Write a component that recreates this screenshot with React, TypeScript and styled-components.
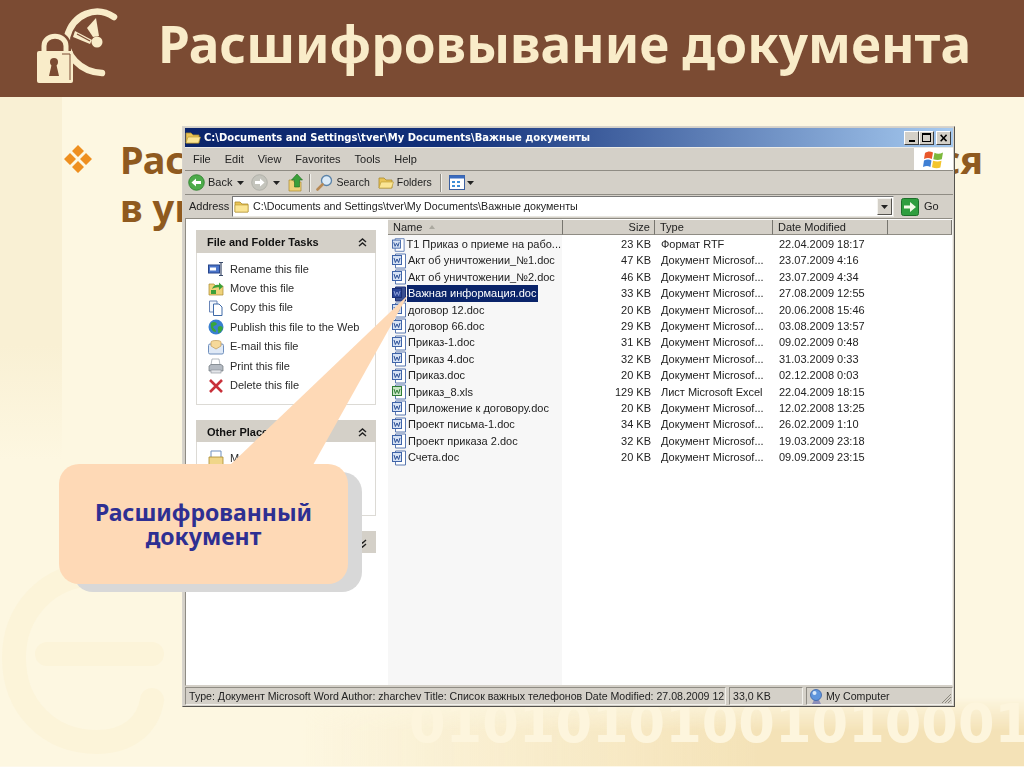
import React from "react";
import styled, { createGlobalStyle } from "styled-components";

const UI_FONT = `"Liberation Sans", Arial, sans-serif`;
const SLIDE_FONT = `"Noto Sans", "Open Sans", Arial, sans-serif`;

const GlobalStyle = createGlobalStyle`
    html, body {
        margin: 0;
        padding: 0;
        background: #fdf6df;
    }
`;

const files = [
    { name: "Т1 Приказ о приеме на рабо...", size: "23 KB", type: "Формат RTF", date: "22.04.2009 18:17" },
    { name: "Акт об уничтожении_№1.doc", size: "47 KB", type: "Документ Microsof...", date: "23.07.2009 4:16" },
    { name: "Акт об уничтожении_№2.doc", size: "46 KB", type: "Документ Microsof...", date: "23.07.2009 4:34" },
    { name: "Важная информация.doc", size: "33 KB", type: "Документ Microsof...", date: "27.08.2009 12:55", selected: true },
    { name: "договор 12.doc", size: "20 KB", type: "Документ Microsof...", date: "20.06.2008 15:46" },
    { name: "договор 66.doc", size: "29 KB", type: "Документ Microsof...", date: "03.08.2009 13:57" },
    { name: "Приказ-1.doc", size: "31 KB", type: "Документ Microsof...", date: "09.02.2009 0:48" },
    { name: "Приказ 4.doc", size: "32 KB", type: "Документ Microsof...", date: "31.03.2009 0:33" },
    { name: "Приказ.doc", size: "20 KB", type: "Документ Microsof...", date: "02.12.2008 0:03" },
    { name: "Приказ_8.xls", size: "129 KB", type: "Лист Microsoft Excel", date: "22.04.2009 18:15", excel: true },
    { name: "Приложение к договору.doc", size: "20 KB", type: "Документ Microsof...", date: "12.02.2008 13:25" },
    { name: "Проект письма-1.doc", size: "34 KB", type: "Документ Microsof...", date: "26.02.2009 1:10" },
    { name: "Проект приказа 2.doc", size: "32 KB", type: "Документ Microsof...", date: "19.03.2009 23:18" },
    { name: "Счета.doc", size: "20 KB", type: "Документ Microsof...", date: "09.09.2009 23:15" },
];

const Logo = () => (
    <svg width="140" height="97" viewBox="0 0 140 97">
        <path d="M114 17 C96 5 73 14 67 37 C64 54 80 72 102 73" fill="none" stroke="#f9ecc9" strokeWidth="6.5" strokeLinecap="round" />
        <path d="M96 18 L87 28 L93 37 L99 36 Z" fill="#f9ecc9" />
        <path d="M75 31 L92 40 L90 44 L73 37 Z" fill="#f9ecc9" />
        <path d="M77 34 L90 41" stroke="#7b4b33" strokeWidth="1.2" />
        <circle cx="97" cy="42" r="5.5" fill="#f9ecc9" />
        <path d="M44 52 V46 C44 33 66 33 66 46 V52" fill="none" stroke="#7b4b33" strokeWidth="10" />
        <path d="M44 52 V46 C44 33 66 33 66 46 V52" fill="none" stroke="#f9ecc9" strokeWidth="5" />
        <rect x="37" y="51" width="36" height="32" rx="2" fill="#f9ecc9" />
        <path d="M62 54 H70 V80" fill="none" stroke="#7b4b33" strokeWidth="1" />
        <circle cx="54" cy="62" r="4" fill="#7b4b33" />
        <path d="M52 63 H56 L59 76 H49 Z" fill="#7b4b33" />
    </svg>
);

const Bullet = () => (
    <svg width="28" height="28" viewBox="0 0 28 28">
        <path d="M14 0 L20 6 L14 12 L8 6 Z M6 8 L12 14 L6 20 L0 14 Z M22 8 L28 14 L22 20 L16 14 Z M14 16 L20 22 L14 28 L8 22 Z" fill="#ee8f1f" />
    </svg>
);

const Watermark = () => (
    <svg width="190" height="210" viewBox="0 0 190 210">
        <path d="M95 14 C45 14 12 52 12 98 C12 148 48 182 95 182 C125 182 146 166 150 140 M150 94 H45" fill="none" stroke="#fcf4d9" strokeWidth="24" strokeLinecap="round" />
    </svg>
);

const FolderIcon = ({ open }: { open?: boolean }) => (
    <svg width="16" height="15" viewBox="0 0 16 15">
        <path d="M1 3 H6 L8 5 H14 V13 H1 Z" fill="#e9c356" stroke="#a98a2e" strokeWidth="0.8" />
        <path d={open ? "M3 7 H15.5 L13.5 13 H1 Z" : "M1 6 H14 V13 H1 Z"} fill="#fbe594" stroke="#b8972f" strokeWidth="0.6" />
    </svg>
);

const NavArrow = ({ disabled }: { disabled?: boolean }) => (
    <svg width="17" height="17" viewBox="0 0 17 17">
        <circle cx="8.5" cy="8.5" r="7.8" fill={disabled ? "#c4c4bc" : "#4cab4a"} stroke={disabled ? "#a9a9a2" : "#2a7d2a"} strokeWidth="0.8" />
        <path d={disabled ? "M4 7 H9 V4.5 L13.5 8.5 L9 12.5 V10 H4 Z" : "M13 7 H8 V4.5 L3.5 8.5 L8 12.5 V10 H13 Z"} fill="#fff" />
    </svg>
);

const UpIcon = () => (
    <svg width="16" height="19" viewBox="0 0 16 19">
        <path d="M1 7 H5 L6 9 H13 V18 H1 Z" fill="#efd27a" stroke="#a98a2e" strokeWidth="0.7" />
        <path d="M9 1 L14.5 7 H11.5 V14 H6.5 V7 H3.5 Z" fill="#3ba03a" stroke="#1f6d20" strokeWidth="0.6" />
    </svg>
);

const SearchIcon = () => (
    <svg width="17" height="17" viewBox="0 0 17 17">
        <circle cx="10.5" cy="6.5" r="5" fill="#dcebf8" stroke="#5b83a8" strokeWidth="1.3" />
        <path d="M6.5 10.5 L1.5 15.5" stroke="#b88a55" strokeWidth="2.6" strokeLinecap="round" />
    </svg>
);

const ViewsIcon = () => (
    <svg width="16" height="15" viewBox="0 0 16 15">
        <rect x="0.5" y="0.5" width="15" height="14" fill="#fff" stroke="#3b5f9e" />
        <rect x="0.5" y="0.5" width="15" height="3" fill="#3b6cc0" />
        <path d="M3 6 H6 V8 H3 Z M8 6 H11 V8 H8 Z M3 10 H6 V12 H3 Z M8 10 H11 V12 H8 Z" fill="#3f8fd8" />
    </svg>
);

const Caret = () => (
    <svg width="7" height="4" viewBox="0 0 7 4">
        <path d="M0 0 H7 L3.5 4 Z" fill="#222" />
    </svg>
);

const WinFlag = () => (
    <svg width="21" height="21" viewBox="0 0 21 21">
        <path d="M2 4 C5 2 7 2 10 3.5 L8.8 10 C6 8.7 4 8.7 1 10 Z" fill="#e8572a" />
        <path d="M11.5 3.8 C14 5 17 5 20 3.5 L18.8 10.2 C16 11.3 13 11.2 10.3 10.2 Z" fill="#7cb83c" />
        <path d="M1 11.5 C4 10.2 6 10.2 8.5 11.4 L7.4 18 C5 16.8 3 16.8 0 18 Z" fill="#3f7fd4" />
        <path d="M10 11.7 C13 12.8 16 12.8 18.5 11.7 L17.4 18.4 C15 19.4 12 19.4 9 18.2 Z" fill="#f3c52e" />
    </svg>
);

const GoIcon = () => (
    <svg width="18" height="18" viewBox="0 0 18 18">
        <rect x="0.5" y="0.5" width="17" height="17" rx="2" fill="#2f9e3f" stroke="#1d6f2a" />
        <path d="M3 7.5 H9 V4 L15 9 L9 14 V10.5 H3 Z" fill="#f2fbe8" />
    </svg>
);

const DocIcon = ({ excel, selected }: { excel?: boolean; selected?: boolean }) => (
    <svg width="15" height="16" viewBox="0 0 15 16">
        <path d="M3.5 1 H13.5 V15 H3.5 Z" fill={selected ? "#3a4f90" : "#fff"} stroke={selected ? "#1b2f74" : "#5a78b0"} />
        <rect x="0.5" y="2.5" width="9" height="9" fill={selected ? "#2b4596" : excel ? "#c8e6c4" : "#d6e2f4"} stroke={selected ? "#1b2f74" : excel ? "#2f7c35" : "#3f64a8"} strokeWidth="1" />
        <path d="M2 5 L3.4 9.5 L5 6 L6.6 9.5 L8 5" fill="none" stroke={selected ? "#8ea0d8" : excel ? "#2f7c35" : "#2b4f96"} strokeWidth="1" />
    </svg>
);

const RenameIcon = () => (
    <svg width="16" height="16" viewBox="0 0 16 16">
        <rect x="0.5" y="4" width="11" height="8" fill="#4a74c9" stroke="#27458a" />
        <rect x="2" y="6.5" width="6" height="3" fill="#fff" />
        <path d="M13 1.5 V14.5 M11 1.5 H15 M11 14.5 H15" stroke="#3a4a6a" strokeWidth="1.2" fill="none" />
    </svg>
);

const MoveIcon = () => (
    <svg width="16" height="16" viewBox="0 0 16 16">
        <path d="M1 4 H6 L7.5 6 H15 V15 H1 Z" fill="#efd27a" stroke="#a98a2e" strokeWidth="0.7" />
        <path d="M4 9 C5 5 9 4 11 5 V2.5 L15 6.5 L11 10 V7.5 C9 7 6 8 4 9 Z M3 10 L8 10 L8 14 L3 14 Z" fill="#3ba03a" />
    </svg>
);

const CopyIcon = () => (
    <svg width="16" height="16" viewBox="0 0 16 16">
        <path d="M1.5 1 H9 V12 H1.5 Z" fill="#f2f6fc" stroke="#6a86b8" />
        <path d="M5.5 4 H11 L14 7 V15.5 H5.5 Z" fill="#fff" stroke="#3f6aa8" />
    </svg>
);

const GlobeIcon = () => (
    <svg width="16" height="16" viewBox="0 0 16 16">
        <circle cx="8" cy="8" r="7.5" fill="#3a7fd0" />
        <path d="M3 4 C6 2 8 3 9 5 C8 7 6 6 5 8 C6 10 8 10 8 13 C5 13 2 10 3 4 Z M10 8 C12 6 14 7 15 9 C14 12 12 14 10 14 C11 12 9 10 10 8 Z" fill="#38a63c" />
    </svg>
);

const MailIcon = () => (
    <svg width="16" height="16" viewBox="0 0 16 16">
        <rect x="0.5" y="5" width="15" height="10" rx="1.5" fill="#dfe9f6" stroke="#6f8fbd" />
        <path d="M3 7 V3 C3 1 13 1 13 3 V7 L8 10 Z" fill="#f6d99a" stroke="#c09a58" strokeWidth="0.7" />
    </svg>
);

const PrintIcon = () => (
    <svg width="16" height="16" viewBox="0 0 16 16">
        <path d="M4 1 H11 L12 7 H3 Z" fill="#fff" stroke="#9aa0a8" strokeWidth="0.7" />
        <path d="M1 8 L3 6.5 H13 L15 8 V13 H1 Z" fill="#b4bac2" stroke="#6f757d" strokeWidth="0.7" />
        <rect x="3" y="12" width="10" height="3" fill="#e4e6ea" stroke="#878c94" strokeWidth="0.6" />
    </svg>
);

const DeleteIcon = () => (
    <svg width="16" height="16" viewBox="0 0 16 16">
        <path d="M2 2 L14 14 M14 2 L2 14" stroke="#c8303a" strokeWidth="2.6" />
    </svg>
);

const DocsIcon = () => (
    <svg width="16" height="16" viewBox="0 0 16 16">
        <path d="M3 1 H13 V8 H3 Z" fill="#fff" stroke="#6f8fbd" />
        <path d="M1 7 H15 V15 H1 Z" fill="#f0d689" stroke="#a98a2e" strokeWidth="0.8" />
    </svg>
);

const ComputerIcon = () => (
    <svg width="14" height="17" viewBox="0 0 14 17">
        <path d="M5 12 H10 L12 16 H3 Z" fill="#8d8fb8" />
        <circle cx="7" cy="7" r="5.5" fill="#5f95dc" stroke="#3a62a8" strokeWidth="0.8" />
        <circle cx="5.5" cy="5" r="2" fill="#d8e8fa" />
    </svg>
);

const Chevrons = ({ down }: { down?: boolean }) => (
    <svg width="9" height="9" viewBox="0 0 9 9">
        <path d={down ? "M1 1 L4.5 4 L8 1 M1 5 L4.5 8 L8 5" : "M1 4 L4.5 1 L8 4 M1 8 L4.5 5 L8 8"} fill="none" stroke="#222" strokeWidth="1.4" />
    </svg>
);

const Grip = () => (
    <svg width="12" height="12" viewBox="0 0 12 12">
        <path d="M11 2 L2 11 M11 5 L5 11 M11 8 L8 11" stroke="#8c897f" strokeWidth="1" />
    </svg>
);

const tasks = [
    { icon: <RenameIcon />, label: "Rename this file" },
    { icon: <MoveIcon />, label: "Move this file" },
    { icon: <CopyIcon />, label: "Copy this file" },
    { icon: <GlobeIcon />, label: "Publish this file to the Web" },
    { icon: <MailIcon />, label: "E-mail this file" },
    { icon: <PrintIcon />, label: "Print this file" },
    { icon: <DeleteIcon />, label: "Delete this file" },
];

const App = () => {
    return (
        <>
            <GlobalStyle />
            <Slide>
                <Header>
                    <LogoBox><Logo /></LogoBox>
                    <Title>Расшифровывание документа</Title>
                </Header>
                <Body>
                    <Point>
                        <BulletBox><Bullet /></BulletBox>
                        <PointText>
                            <PointLine>Расшифрованный документ открывается</PointLine>
                            <PointLine $last>в указанной папке</PointLine>
                        </PointText>
                    </Point>
                </Body>
                <WatermarkBox><Watermark /></WatermarkBox>
                <BottomGlow />
                <Binary>01010101001010001</Binary>
                <BottomEdge />

                <Window>
                    <TitleBar>
                        <FolderIcon open />
                        <TitleText>C:\Documents and Settings\tver\My Documents\Важные документы</TitleText>
                        <WindowButtons>
                            <WindowButton><Minimize /></WindowButton>
                            <WindowButton><Maximize /></WindowButton>
                            <WindowButton $close><CloseMark>×</CloseMark></WindowButton>
                        </WindowButtons>
                    </TitleBar>
                    <MenuBar>
                        <MenuItems>
                            <span>File</span>
                            <span>Edit</span>
                            <span>View</span>
                            <span>Favorites</span>
                            <span>Tools</span>
                            <span>Help</span>
                        </MenuItems>
                        <Throbber><WinFlag /></Throbber>
                    </MenuBar>
                    <Toolbar>
                        <ToolButton><NavArrow /><span>Back</span></ToolButton>
                        <CaretBox $gap={5}><Caret /></CaretBox>
                        <ToolButton $gap={7}><NavArrow disabled /></ToolButton>
                        <CaretBox $gap={5}><Caret /></CaretBox>
                        <ToolButton $gap={8}><UpIcon /></ToolButton>
                        <ToolSeparator $gap={5} />
                        <ToolButton $gap={6}><SearchIcon /><ToolLabel>Search</ToolLabel></ToolButton>
                        <ToolButton $gap={8}><FolderIcon open /><ToolLabel>Folders</ToolLabel></ToolButton>
                        <ToolSeparator $gap={8} />
                        <ToolButton $gap={8}><ViewsIcon /></ToolButton>
                        <CaretBox $gap={2}><Caret /></CaretBox>
                    </Toolbar>
                    <AddressBar>
                        <AddressLabel>Address</AddressLabel>
                        <AddressInput>
                            <FolderIcon />
                            <AddressText>C:\Documents and Settings\tver\My Documents\Важные документы</AddressText>
                            <DropButton><Caret /></DropButton>
                        </AddressInput>
                        <GoButton><GoIcon /><span>Go</span></GoButton>
                    </AddressBar>
                    <Content>
                        <Sidebar>
                            <Panel>
                                <PanelHeader $height={23}>File and Folder Tasks<Chevrons /></PanelHeader>
                                <TaskList $height={152}>
                                    {tasks.map((task) => (
                                        <Task key={task.label}>{task.icon}<span>{task.label}</span></Task>
                                    ))}
                                </TaskList>
                            </Panel>
                            <Panel>
                                <PanelHeader $height={22}>Other Places<Chevrons /></PanelHeader>
                                <TaskList $height={74}>
                                    <Task><DocsIcon /><span>My Documents</span></Task>
                                    <Task><DocsIcon /><span>Shared Documents</span></Task>
                                    <Task><ComputerIcon /><span>My Computer</span></Task>
                                </TaskList>
                            </Panel>
                            <Panel>
                                <PanelHeader $height={22}>Details<Chevrons down /></PanelHeader>
                            </Panel>
                        </Sidebar>
                        <FilePane>
                            <ColumnHeaders>
                                <ColumnHeader>Name<SortMark /></ColumnHeader>
                                <ColumnHeader $right>Size</ColumnHeader>
                                <ColumnHeader>Type</ColumnHeader>
                                <ColumnHeader>Date Modified</ColumnHeader>
                                <ColumnHeader />
                            </ColumnHeaders>
                            {files.map((file) => (
                                <FileRow key={file.name}>
                                    <NameCell>
                                        <DocIcon excel={file.excel} selected={file.selected} />
                                        <FileName $selected={file.selected}>{file.name}</FileName>
                                    </NameCell>
                                    <SizeCell>{file.size}</SizeCell>
                                    <InfoCell>{file.type}</InfoCell>
                                    <InfoCell>{file.date}</InfoCell>
                                </FileRow>
                            ))}
                        </FilePane>
                    </Content>
                    <StatusBar>
                        <StatusCell $width={541}>Type: Документ Microsoft Word Author: zharchev Title: Список важных телефонов Date Modified: 27.08.2009 12:55</StatusCell>
                        <StatusCell $width={74}>33,0 KB</StatusCell>
                        <StatusCell $grow><ComputerIcon /><span>My Computer</span><GripBox><Grip /></GripBox></StatusCell>
                    </StatusBar>
                </Window>

                <CalloutTail viewBox="0 0 200 175" width="200" height="175">
                    <path d="M198 2 L20 172 L103 172 Z" fill="#fed9b6" />
                </CalloutTail>
                <Callout>Расшифрованный<br />документ</Callout>
            </Slide>
        </>
    );
};

const Slide = styled.div`
    position: relative;
    width: 1024px;
    height: 767px;
    overflow: hidden;
    background:
        linear-gradient(to bottom, rgba(249, 240, 212, 1) 0, rgba(249, 240, 212, 1) 45%, rgba(249, 240, 212, 0) 60%) 0 0 / 62px 100% no-repeat,
        #fdf7e1;
`;

const Header = styled.header`
    display: flex;
    align-items: center;
    height: 97px;
    padding-bottom: 9px;
    box-sizing: border-box;
    background: #7b4b33;
`;

const LogoBox = styled.div`
    display: flex;
    width: 158px;
    height: 88px;
    flex: none;
`;

const Title = styled.h1`
    margin: 0;
    font: 700 51.3px/1 ${SLIDE_FONT};
    color: #f9ecc9;
    white-space: nowrap;
`;

const Body = styled.main`
    padding: 38px 41px 0 64px;
`;

const Point = styled.div`
    display: flex;
    gap: 28px;
`;

const BulletBox = styled.div`
    flex: none;
    margin-top: 10px;
`;

const PointText = styled.div`
    flex: 1;
    font: 700 38px/48px ${SLIDE_FONT};
    color: #8f5a1f;
`;

const PointLine = styled.div<{ $last?: boolean }>`
    text-align: justify;
    text-align-last: ${({ $last }) => ($last ? "left" : "justify")};
`;

const WatermarkBox = styled.div`
    position: absolute;
    left: 2px;
    top: 560px;
`;

const BottomGlow = styled.div`
    position: absolute;
    left: 0;
    right: 0;
    bottom: 0;
    height: 70px;
    background: linear-gradient(to right, rgba(244, 226, 183, 0) 300px, #f4e2b7 760px);
    -webkit-mask-image: linear-gradient(to bottom, transparent 0, #000 34px);
    mask-image: linear-gradient(to bottom, transparent 0, #000 34px);
`;

const Binary = styled.div`
    position: absolute;
    left: 409px;
    top: 698px;
    font: 700 52.6px/1 "DejaVu Sans", sans-serif;
    white-space: nowrap;
    color: #fdf5dd;
`;

const BottomEdge = styled.div`
    position: absolute;
    left: 0;
    right: 0;
    bottom: 0;
    height: 1px;
    background: #fdf8ea;
`;

const Window = styled.section`
    position: absolute;
    left: 182px;
    top: 126px;
    width: 773px;
    height: 581px;
    box-sizing: border-box;
    display: flex;
    flex-direction: column;
    padding: 1px 1px 1px 2px;
    background: #d4d0c8;
    border: 1px solid #d8d5cd;
    border-right-color: #55534e;
    border-bottom-color: #55534e;
    font: 400 11px/1 ${UI_FONT};
    color: #222;
    filter: blur(0.3px);
`;

const TitleBar = styled.div`
    display: flex;
    align-items: center;
    gap: 3px;
    height: 19px;
    flex: none;
    background: linear-gradient(to right, #0a246a 0, #12307a 35%, #a6caf0 100%);
`;

const TitleText = styled.div`
    font: 700 10px/1 "DejaVu Sans", sans-serif;
    color: #fff;
    white-space: nowrap;
`;

const WindowButtons = styled.div`
    display: flex;
    margin-left: auto;
    margin-right: 2px;
`;

const WindowButton = styled.div<{ $close?: boolean }>`
    position: relative;
    display: flex;
    align-items: center;
    justify-content: center;
    width: 15px;
    height: 14px;
    margin-left: ${({ $close }) => ($close ? "2px" : "0")};
    box-sizing: border-box;
    background: #d4d0c8;
    border: 1px solid #fff;
    border-right-color: #404040;
    border-bottom-color: #404040;
`;

const Minimize = styled.i`
    width: 6px;
    height: 2px;
    margin-top: 7px;
    background: #000;
`;

const Maximize = styled.i`
    width: 7px;
    height: 6px;
    border: 1px solid #000;
    border-top-width: 2px;
`;

const CloseMark = styled.b`
    font: 700 14px/1 "Liberation Sans", sans-serif;
    color: #000;
`;

const MenuBar = styled.div`
    display: flex;
    height: 24px;
    flex: none;
    border-top: 1px solid #ecebe6;
    border-bottom: 1px solid #8f8c84;
    box-sizing: border-box;
`;

const MenuItems = styled.nav`
    display: flex;
    align-items: center;
    gap: 14px;
    flex: 1;
    padding-left: 8px;
`;

const Throbber = styled.div`
    display: flex;
    align-items: center;
    justify-content: center;
    width: 39px;
    background: #fff;
`;

const Toolbar = styled.div`
    display: flex;
    align-items: center;
    height: 24px;
    flex: none;
    padding-left: 3px;
    border-bottom: 1px solid #8f8c84;
    box-sizing: border-box;
`;

const ToolButton = styled.div<{ $gap?: number }>`
    display: flex;
    align-items: center;
    gap: 3px;
    margin-left: ${({ $gap }) => $gap ?? 0}px;
`;

const ToolLabel = styled.span`
    font-size: 10.5px;
`;

const CaretBox = styled.div<{ $gap?: number }>`
    display: flex;
    margin-left: ${({ $gap }) => $gap ?? 0}px;
`;

const ToolSeparator = styled.div<{ $gap?: number }>`
    width: 1px;
    height: 18px;
    margin-left: ${({ $gap }) => $gap ?? 0}px;
    background: #8f8c84;
    box-shadow: 1px 0 0 #f2f1ec;
`;

const AddressBar = styled.div`
    display: flex;
    align-items: center;
    height: 23px;
    flex: none;
    padding-left: 4px;
    box-sizing: border-box;
`;

const AddressLabel = styled.div`
    width: 43px;
    flex: none;
`;

const AddressInput = styled.div`
    display: flex;
    align-items: center;
    gap: 3px;
    width: 662px;
    height: 21px;
    flex: none;
    padding-left: 1px;
    box-sizing: border-box;
    background: #fff;
    border: 1px solid #777;
    border-right-color: #e8e6e0;
    border-bottom-color: #e8e6e0;
`;

const AddressText = styled.div`
    flex: 1;
    font-size: 10.7px;
    white-space: nowrap;
`;

const DropButton = styled.div`
    display: flex;
    align-items: center;
    justify-content: center;
    width: 15px;
    height: 17px;
    margin-right: 1px;
    background: #d4d0c8;
    border: 1px solid #f5f4f0;
    border-right-color: #55534e;
    border-bottom-color: #55534e;
    box-sizing: border-box;
`;

const GoButton = styled.div`
    display: flex;
    align-items: center;
    gap: 5px;
    margin-left: 7px;
`;

const Content = styled.div`
    display: flex;
    flex: 1;
    min-height: 0;
    background: #fff;
    border: 1px solid #8f8c84;
    border-right-color: #f2f1ec;
    border-bottom-color: #d4d0c8;
`;

const Sidebar = styled.aside`
    display: flex;
    flex-direction: column;
    gap: 15px;
    width: 202px;
    flex: none;
    padding: 11px 12px 0 10px;
    box-sizing: border-box;
`;

const Panel = styled.div`
    display: flex;
    flex-direction: column;
`;

const PanelHeader = styled.div<{ $height: number }>`
    display: flex;
    align-items: center;
    justify-content: space-between;
    height: ${({ $height }) => $height}px;
    padding: 2px 9px 0 11px;
    box-sizing: border-box;
    background: #d4d0c8;
    font-weight: 700;
    color: #111;
`;

const TaskList = styled.div<{ $height: number }>`
    display: flex;
    flex-direction: column;
    gap: 3.45px;
    height: ${({ $height }) => $height}px;
    padding: 8px 0 0 11px;
    box-sizing: border-box;
    background: #fff;
    border: 1px solid #dcdad5;
    border-top: 0;
`;

const Task = styled.div`
    display: flex;
    align-items: center;
    gap: 6px;
    height: 16px;
    color: #2b2b2b;
`;

const FilePane = styled.div`
    flex: 1;
    padding-top: 1px;
    background: linear-gradient(to right, #f7f7f7 174px, #fff 174px);
`;

const ColumnHeaders = styled.div`
    display: grid;
    grid-template-columns: 175px 92px 118px 115px 1fr;
    height: 15px;
    margin-bottom: 1px;
    background: #d4d0c8;
`;

const ColumnHeader = styled.div<{ $right?: boolean }>`
    display: flex;
    align-items: center;
    justify-content: ${({ $right }) => ($right ? "flex-end" : "flex-start")};
    padding: 0 4px 0 5px;
    border-right: 1px solid #77756f;
    border-bottom: 1px solid #8f8c84;
`;

const SortMark = styled.i`
    width: 0;
    height: 0;
    margin-left: 7px;
    border: 3px solid transparent;
    border-top: 0;
    border-bottom: 4px solid #aaa89f;
`;

const FileRow = styled.div`
    display: grid;
    grid-template-columns: 175px 92px 118px 115px;
    align-items: center;
    height: 16.4px;
`;

const NameCell = styled.div`
    display: flex;
    align-items: center;
    padding-left: 4px;
`;

const FileName = styled.span<{ $selected?: boolean }>`
    padding: 3px 2px 3px 1px;
    white-space: nowrap;
    color: ${({ $selected }) => ($selected ? "#fff" : "#222")};
    background: ${({ $selected }) => ($selected ? "#0a246a" : "transparent")};
`;

const SizeCell = styled.div`
    padding-right: 4px;
    text-align: right;
`;

const InfoCell = styled.div`
    padding-left: 6px;
    white-space: nowrap;
`;

const StatusBar = styled.footer`
    display: flex;
    height: 19px;
    flex: none;
    gap: 3px;
    padding-top: 1px;
    box-sizing: border-box;
    font-size: 10.6px;
`;

const StatusCell = styled.div<{ $width?: number; $grow?: boolean }>`
    position: relative;
    display: flex;
    align-items: center;
    gap: 3px;
    width: ${({ $width }) => ($width ? `${$width}px` : "auto")};
    flex: ${({ $grow }) => ($grow ? "1" : "none")};
    padding-left: ${({ $grow }) => ($grow ? "2px" : "3px")};
    box-sizing: border-box;
    overflow: hidden;
    white-space: nowrap;
    border: 1px solid #8f8c84;
    border-right-color: #f2f1ec;
    border-bottom-color: #f2f1ec;
`;

const GripBox = styled.div`
    position: absolute;
    right: 0;
    bottom: 0;
    display: flex;
`;

const CalloutTail = styled.svg`
    position: absolute;
    left: 210px;
    top: 293px;
`;

const Callout = styled.div`
    position: absolute;
    left: 59px;
    top: 464px;
    display: flex;
    align-items: center;
    justify-content: center;
    width: 289px;
    height: 120px;
    border-radius: 20px;
    background: #fed9b6;
    box-shadow: 14px 8px 0 #d8d8d8;
    font: 700 23px/24px ${SLIDE_FONT};
    color: #2e2f92;
    text-align: center;
`;

export default App;
